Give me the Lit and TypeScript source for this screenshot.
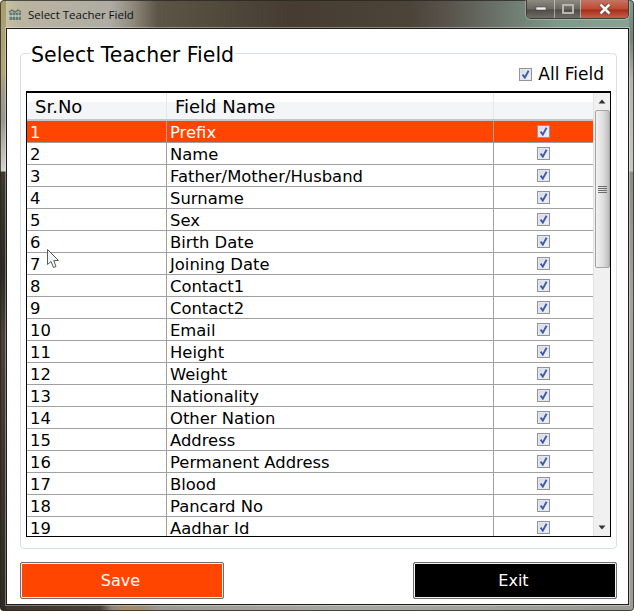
import { LitElement, html, css } from "lit";
import { customElement } from "lit/decorators.js";

const FIELDS = ["Prefix","Name","Father/Mother/Husband","Surname","Sex","Birth Date","Joining Date","Contact1","Contact2","Email","Height","Weight","Nationality","Other Nation","Address","Permanent Address","Blood","Pancard No","Aadhar Id"];

const check = html`<span class="cb"><svg width="9" height="9" viewBox="0 0 9 9"><path d="M1.6 4.6 L3.8 7.6 L7.6 0.8" fill="none" stroke="#3f5aa8" stroke-width="1.9"/></svg></span>`;

@customElement("app-root")
export class AppRoot extends LitElement {
  static styles = css`
    :host { display: block; width: 634px; height: 611px; font-family: "DejaVu Sans", sans-serif; color: #000; }
    .win { position: relative; box-sizing: border-box; width: 634px; height: 611px; display: flex; flex-direction: column; padding: 0 5px 6px 6px; overflow: hidden; border-radius: 4px;
      box-shadow: inset 0 0 0 1px rgba(40,36,32,.75);
      background:
        linear-gradient(180deg, #a89c6e 0, #b0a67c 70px, #a09a88 94px, #9a968e 120px, #d6d4ce 171px, #3f3730 172px, #2c2824 270px, #4a4238 340px, #3b332b 480px, #2f2a25 611px) left top / 6px 611px no-repeat,
        linear-gradient(180deg, #7e9a8a 0, #6f8478 38px, #b4b4ae 80px, #c8c8c2 171px, #8c8c88 172px, #a2a29e 300px, #9a9a96 611px) right top / 5px 611px no-repeat,
        linear-gradient(90deg, #3b3229 0, #4a4036 100px, #8c8478 112px, #a58a66 125px, #9c8a70 140px, #9a9a92 160px, #a8a8a2 360px, #989894 634px) left bottom / 634px 6px no-repeat,
        linear-gradient(90deg, #cfc7a8 0, #bab4a0 20px, #aeaca4 110px, #8e897c 133px, #5c5446 158px, #463c32 290px, #4c4339 410px, #59554c 450px, #6f7a70 510px, #7e9a8a 560px, #8aa294 634px); }
    .title { flex: 0 0 28px; display: flex; align-items: flex-start; }
    .appicon { margin: 9px 0 0 2px; width: 14px; height: 12px; flex: none; }
    .ttext { margin: 6px 0 0 6px; font: 11.5px/17px "Open Sans", sans-serif; color: #101010; }
    .ctrls { margin-left: auto; display: flex; height: 18px; border: 1px solid #3d3d3a; border-top: none; border-radius: 0 0 5px 5px; overflow: hidden; box-shadow: 0 0 0 1px rgba(255,255,255,.25); }
    .ctrl { display: flex; align-items: center; justify-content: center; height: 18px; box-sizing: border-box; background: linear-gradient(#8d8a82, #6a675f 50%, #4e4c45 55%, #6f6d66); border-right: 1px solid rgba(255,255,255,.45); }
    .min { width: 28px; }
    .max { width: 26px; }
    .close { width: 47px; border-right: none; background: linear-gradient(#c47465, #bd4a30 50%, #a52d18 55%, #c45f4d); }
    .client { flex: 1; min-height: 0; box-sizing: border-box; background: #fff; border: 1px solid #1c1c1c; box-shadow: 0 0 0 1px rgba(255,255,255,.35); display: flex; flex-direction: column; padding: 24px 11px 5px 13px; }
    .group { flex: 0 0 496px; min-height: 0; box-sizing: border-box; border: 1px solid #d5dfe5; border-radius: 4px; padding: 0 5px 11px 5px; display: flex; flex-direction: column; }
    .legend { display: flex; flex: none; align-items: flex-start; height: 48px; margin-top: -11px; }
    .legend h1 { margin: 0 0 0 4px; padding: 0 1px; background: #fff; font: 400 20.5px/25px "DejaVu Sans", sans-serif; }
    .all { margin-left: auto; margin-top: 21px; margin-right: 7px; display: flex; align-items: center; gap: 6px; font-size: 17px; line-height: 20px; }
    .grid { flex: 1; min-height: 0; border: 1px solid #000; border-top-width: 2px; display: flex; overflow: hidden; }
    .main { flex: 1; min-width: 0; display: flex; flex-direction: column; }
    .row { display: grid; grid-template-columns: 140px 327px 101px; }
    .head { flex: 0 0 28px; box-sizing: border-box; height: 28px; background: linear-gradient(#fff 0 9px, #f4f5f7 9px); border-bottom: 2px solid #c4c6c8; font-size: 18px; line-height: 28px; }
    .head > div { border-right: 1px solid #e6e8ea; box-sizing: border-box; height: 26px; padding-left: 8px; }
    .head > div:last-child { border-right: none; }
    .body { flex: 1; min-height: 0; overflow: hidden; }
    .rec { box-sizing: border-box; height: 22px; border-bottom: 1px solid #a0a0a0; font-size: 16.4px; line-height: 24px; }
    .rec > div { box-sizing: border-box; height: 21px; padding-left: 3px; border-right: 1px solid #a0a0a0; white-space: nowrap; }
    .rec > div:last-child { border-right: none; padding: 0 2px 0 0; display: flex; align-items: center; justify-content: center; }
    .rec.sel { background: #ff4500; color: #fff; }
    .cb { box-sizing: border-box; width: 13px; height: 13px; border: 1px solid #949494; display: inline-flex; align-items: center; justify-content: center; background: linear-gradient(135deg, #d3d8e4, #f4f5f8); box-shadow: inset 0 0 0 1px #e4e7ee; flex: none; }
    .scroll { flex: 0 0 17px; background: #f0f0f0; border-left: 1px solid #e3e3e3; box-sizing: border-box; display: flex; flex-direction: column; align-items: center; }
    .arrow { flex: 0 0 17px; display: flex; align-items: center; justify-content: center; }
    .thumb { box-sizing: border-box; width: 15px; height: 158px; border: 1px solid #a4a4a4; border-radius: 2px; background: linear-gradient(90deg, #f2f2f2, #dedede 55%, #bdbdbd); display: flex; align-items: center; justify-content: center; }
    .spacer { flex: 1; }
    .btns { display: flex; justify-content: space-between; margin-top: 13px; }
    .btn { box-sizing: border-box; width: 204px; height: 37px; border: 1px solid #707070; border-radius: 2px; box-shadow: inset 0 0 0 1px #f2f2f2; padding: 0 3px 0 0; font: 16px "DejaVu Sans", sans-serif; color: #fff; }
    .save { background: #ff4500; }
    .exit { background: #000; }
    .cursor { position: absolute; left: 47px; top: 249px; }
  `;

  render() {
    return html`<div class="win">
      <div class="title">
        <svg class="appicon" viewBox="0 0 14 12">
          <rect x="1" y="3" width="12" height="8" fill="#8fa59a"/>
          <path d="M1 3 L4 1 L7 3 L10 1 L13 3" fill="none" stroke="#5c6b62" stroke-width="1.2"/>
          <path d="M3 4 V11 M6 4 V11 M9 4 V11 M12 4 V11" stroke="#3d4a44" stroke-width="1"/>
          <path d="M1 7 H13" stroke="#e8e8e0" stroke-width="1"/>
        </svg>
        <div class="ttext">Select Teacher Field</div>
        <div class="ctrls">
          <div class="ctrl min"><svg width="12" height="6" viewBox="0 0 12 6"><rect x="1" y="1" width="10" height="3" fill="#f2f2f2" stroke="#444" stroke-width=".6"/></svg></div>
          <div class="ctrl max"><svg width="12" height="10" viewBox="0 0 12 10"><rect x="1" y="1" width="10" height="8" fill="none" stroke="#b6b6b0" stroke-width="2"/></svg></div>
          <div class="ctrl close"><svg width="14" height="12" viewBox="0 0 14 12"><path d="M2.5 1.5 L11.5 10.5 M11.5 1.5 L2.5 10.5" stroke="#55413c" stroke-width="4"/><path d="M2.5 1.5 L11.5 10.5 M11.5 1.5 L2.5 10.5" stroke="#f4f4f4" stroke-width="2.6"/></svg></div>
        </div>
      </div>
      <div class="client">
        <div class="group">
          <div class="legend">
            <h1>Select Teacher Field</h1>
            <div class="all">${check}<span>All Field</span></div>
          </div>
          <div class="grid">
            <div class="main">
              <div class="row head"><div>Sr.No</div><div>Field Name</div><div></div></div>
              <div class="body">
                ${FIELDS.map((f, i) => html`<div class="row rec ${i === 0 ? "sel" : ""}"><div>${i + 1}</div><div>${f}</div><div>${check}</div></div>`)}
              </div>
            </div>
            <div class="scroll">
              <div class="arrow"><svg width="8" height="5" viewBox="0 0 8 5"><path d="M4 0.5 L7.5 4.5 H0.5 Z" fill="#333"/></svg></div>
              <div class="thumb"><svg width="9" height="8" viewBox="0 0 9 8"><path d="M0 1.5 H9 M0 3.5 H9 M0 5.5 H9 M0 7.5 H9" stroke="#6d6d6d" stroke-width="1"/></svg></div>
              <div class="spacer"></div>
              <div class="arrow"><svg width="8" height="5" viewBox="0 0 8 5"><path d="M4 4.5 L7.5 0.5 H0.5 Z" fill="#333"/></svg></div>
            </div>
          </div>
        </div>
        <div class="btns">
          <button class="btn save">Save</button>
          <button class="btn exit">Exit</button>
        </div>
      </div>
      <svg class="cursor" width="14" height="20" viewBox="0 0 14 20">
        <path d="M0.5 0.5 V15.5 L4 12.5 L6.5 18.5 L9 17.5 L6.8 11.5 H11.5 Z" fill="#f4f6f8" stroke="#555c63" stroke-width="1"/>
      </svg>
    </div>`;
  }
}
